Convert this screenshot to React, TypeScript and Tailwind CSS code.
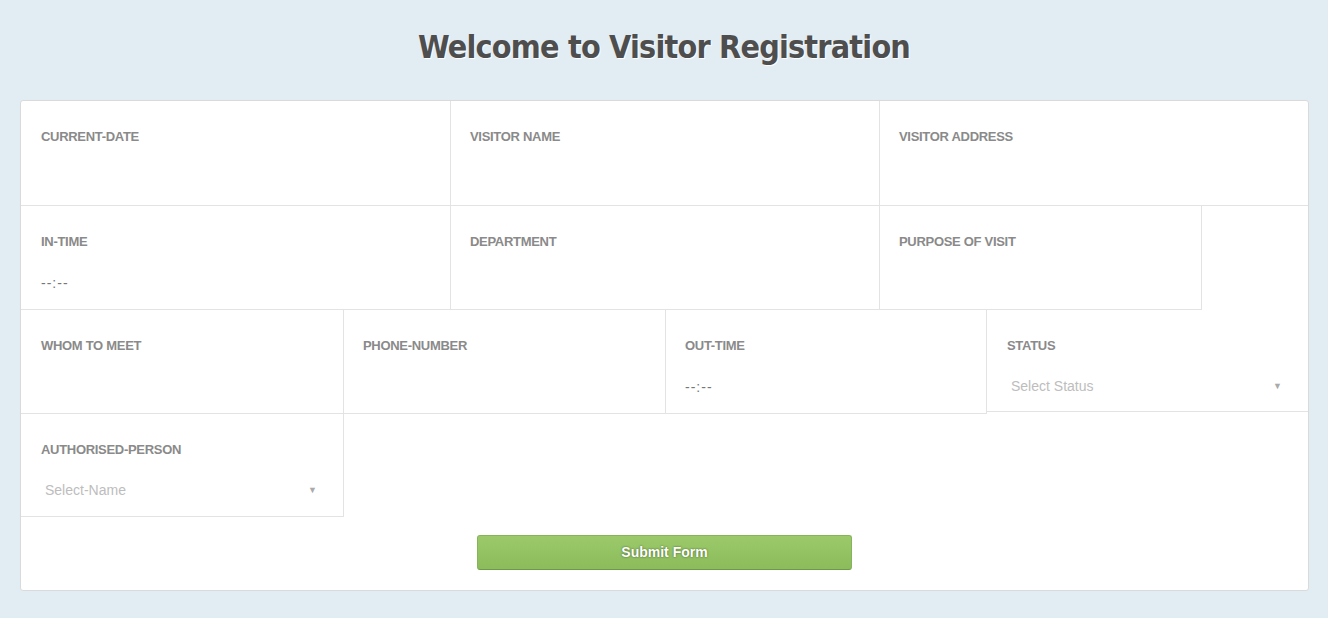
import React from "react";

const label = "text-[13px] font-bold text-[#8a8a8a] uppercase leading-none tracking-[-0.3px]";

function Cell({ w, h = "h-[104px]", title, children, cls = "", pl = "pl-[20px]" }: { w: string; h?: string; title: string; children?: React.ReactNode; cls?: string; pl?: string }) {
  return (
    <div className={`${w} ${h} ${cls} ${pl} border-[#e3e3e3] pr-[20px] pt-[29px] box-border shrink-0`}>
      <div className={label}>{title}</div>
      {children}
    </div>
  );
}

function TimeVal() {
  return <div className="mt-[28px] text-[14px] leading-none text-[#777] tracking-[1px]">--:--</div>;
}

function SelectVal({ text }: { text: string }) {
  return (
    <div className="mt-[27px] flex items-center justify-between pl-[4px] pr-[6px] text-[14px] leading-none text-[#bdbdbd]">
      <span>{text}</span>
      <span className="text-[9px] text-[#aaa]">▼</span>
    </div>
  );
}

export default function App() {
  return (
    <div className="w-[1328px] h-[618px] bg-[#e2ecf3] overflow-hidden" style={{ fontFamily: '"Liberation Sans", Arial, sans-serif' }}>
      <div className="flex justify-center pt-[27px] h-[100px] box-border">
        <h1
          className="whitespace-nowrap text-[#4e4e4e] text-[32px] font-bold leading-[40px] tracking-[-0.8px]"
          style={{ fontFamily: '"DejaVu Sans Condensed", "DejaVu Sans", sans-serif', textShadow: "1px 1px 1px #fff" }}
        >
          Welcome to Visitor Registration
        </h1>
      </div>
      <div className="ml-[20px] w-[1289px] h-[491px] bg-white border border-[#dadada] rounded-[3px] box-border">
        <div className="flex">
          <Cell w="w-[430px]" h="h-[105px]" title="Current-Date" cls="border-r border-b" />
          <Cell w="w-[429px]" h="h-[105px]" title="Visitor Name" cls="border-r border-b" pl="pl-[19px]" />
          <Cell w="w-[428px]" h="h-[105px]" title="Visitor Address" cls="border-b" pl="pl-[19px]" />
        </div>
        <div className="flex">
          <Cell w="w-[430px]" title="In-Time" cls="border-r border-b">
            <TimeVal />
          </Cell>
          <Cell w="w-[429px]" title="Department" cls="border-r border-b" pl="pl-[19px]" />
          <Cell w="w-[322px]" title="Purpose of Visit" cls="border-r border-b" pl="pl-[19px]" />
        </div>
        <div className="flex">
          <Cell w="w-[323px]" title="Whom to Meet" cls="border-r border-b" />
          <Cell w="w-[322px]" title="Phone-Number" cls="border-r border-b" pl="pl-[19px]" />
          <Cell w="w-[321px]" title="Out-Time" cls="border-r border-b" pl="pl-[19px]">
            <TimeVal />
          </Cell>
          <Cell w="w-[321px]" h="h-[102px]" title="Status" cls="border-b">
            <SelectVal text="Select Status" />
          </Cell>
        </div>
        <div className="flex">
          <Cell w="w-[323px]" h="h-[103px]" title="Authorised-Person" cls="border-r border-b">
            <SelectVal text="Select-Name" />
          </Cell>
        </div>
        <div className="flex justify-center pt-[18px]">
          <button
            className="w-[375px] h-[35px] rounded-[3px] border border-[#86b45a] border-b-[#6f9a45] text-white text-[14px] font-bold bg-gradient-to-b from-[#9cca6b] to-[#8bbb5b]"
            style={{ textShadow: "0 0 2px rgba(50,70,25,0.9)" }}
          >
            Submit Form
          </button>
        </div>
      </div>
    </div>
  );
}
